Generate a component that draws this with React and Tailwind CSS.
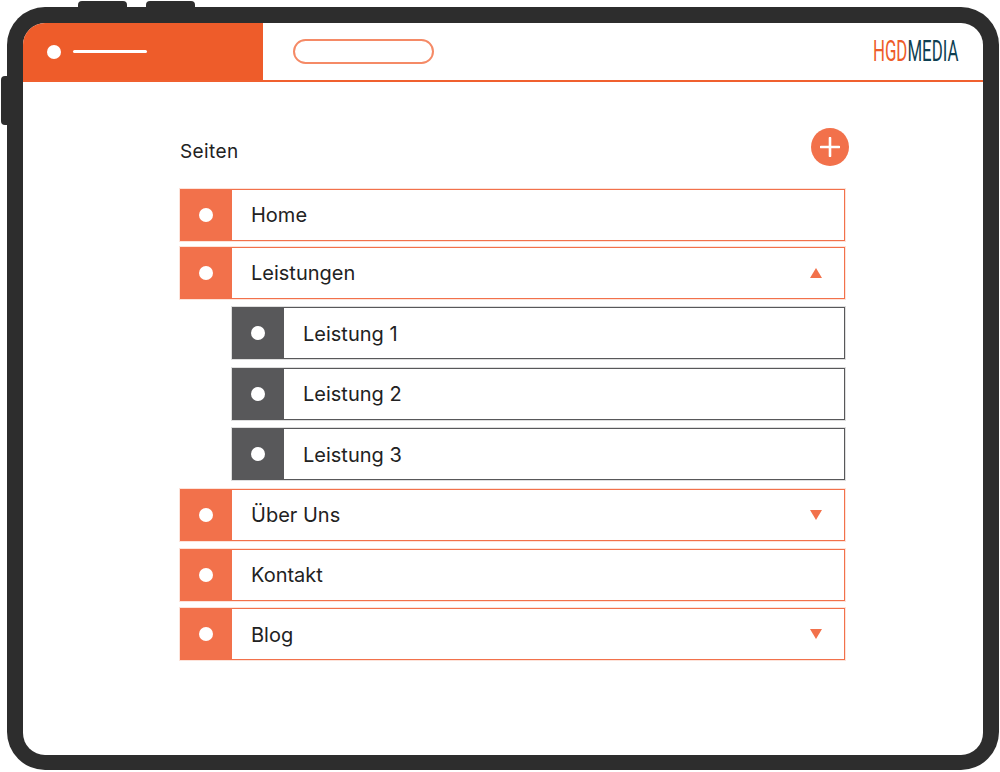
import React from 'react';

// Hauptseiten und Unterseiten der Navigation, in Reihenfolge der Anzeige
const rows = [
    { label: 'Home', top: 'mt-0' },
    { label: 'Leistungen', top: 'mt-[6px]', arrow: 'up' },
    { label: 'Leistung 1', top: 'mt-[8px]', sub: true, low: true },
    { label: 'Leistung 2', top: 'mt-[9px]', sub: true },
    { label: 'Leistung 3', top: 'mt-[8px]', sub: true, low: true },
    { label: 'Über Uns', top: 'mt-[9px]', arrow: 'down' },
    { label: 'Kontakt', top: 'mt-[8px]' },
    { label: 'Blog', top: 'mt-[7px]', arrow: 'down', low: true },
];

const Arrow = ({ dir }) => (
    <svg width="12" height="10" viewBox="0 0 12 10" className="mr-[22px] shrink-0">
        <path d={dir === 'up' ? 'M6 0L12 10H0Z' : 'M0 0H12L6 10Z'} fill="#f2714b" />
    </svg>
);

const Row = ({ label, top, sub, arrow, low }) => (
    <div
        className={
            sub
                ? `${top} ml-[52px] h-[52px] flex border border-[#58585a] shadow-[0_0_0_1px_#dedede]`
                : `${top} h-[52px] flex border border-[#f2714b] shadow-[0_0_0_1px_#fde3da]`
        }
    >
        <div
            className={
                sub
                    ? 'w-[51px] shrink-0 flex items-center justify-center pr-[2px] bg-[#58585a]'
                    : 'w-[51px] shrink-0 flex items-center justify-center pr-[2px] bg-[#f2714b]'
            }
        >
            <span className="w-[14px] h-[14px] rounded-full bg-white" />
        </div>
        <div className="flex-1 flex items-center justify-between pl-[19px]">
            <span className={low ? 'pt-[2px] text-[20px] text-[#222222]' : 'text-[20px] text-[#222222]'}>{label}</span>
            {arrow && <Arrow dir={arrow} />}
        </div>
    </div>
);

const App = () => {
    return (
        <div className="relative w-[1000px] h-[772px] bg-white p-[7px] font-['Inter',sans-serif] overflow-hidden">
            {/* Tasten am Geräterahmen */}
            <div className="absolute left-[78px] top-[1px] w-[49px] h-[8px] rounded-t-[4px] bg-[#2d2d2d]" />
            <div className="absolute left-[146px] top-[1px] w-[49px] h-[8px] rounded-t-[4px] bg-[#2d2d2d]" />
            <div className="absolute left-[1px] top-[76px] w-[8px] h-[49px] rounded-l-[4px] bg-[#2d2d2d]" />

            <div className="w-[992px] h-[763px] rounded-[38px] bg-[#2d2d2d] pt-[16px] px-[16px] pb-[15px]">
                <div className="w-full h-full rounded-[22px] bg-white overflow-hidden">
                    <header className="h-[59px] flex items-stretch border-b-[2px] border-[#f0602f]">
                        <div className="w-[240px] shrink-0 flex items-center pl-[24px] gap-[12px] bg-[#ee5c2a]">
                            <span className="w-[14px] h-[14px] rounded-full bg-white" />
                            <span className="w-[74px] h-[3px] rounded-full bg-white" />
                        </div>
                        <div className="flex-1 flex items-center justify-between pl-[30px] pr-[25px]">
                            <div className="w-[141px] h-[25px] rounded-full border-[2px] border-[#f58a66]" />
                            <div className="w-[85px] h-[24px] flex items-center justify-end">
                                <span className="origin-right scale-x-[0.58] whitespace-nowrap font-['Roboto',sans-serif] font-normal text-[29px] leading-none">
                                    <span className="text-[#ee5c2a]">HGD</span>
                                    <span className="text-[#0e3f52]">MEDIA</span>
                                </span>
                            </div>
                        </div>
                    </header>

                    <main className="w-[665px] ml-[157px] mt-[46px]">
                        <div className="h-[38px] mb-[23px] flex items-center justify-between">
                            <h1 className="pt-[10px] text-[19px] tracking-[0.4px] font-normal text-[#222222]">Seiten</h1>
                            <button className="w-[38px] h-[38px] mr-[-4px] rounded-full flex items-center justify-center bg-[#f2714b]">
                                <svg width="20" height="20" viewBox="0 0 20 20">
                                    <path d="M10 1V19M1 10H19" stroke="#fff" strokeWidth="2.6" strokeLinecap="round" />
                                </svg>
                            </button>
                        </div>
                        {rows.map((r) => (
                            <Row key={r.label} {...r} />
                        ))}
                    </main>
                </div>
            </div>
        </div>
    );
};

export default App;
